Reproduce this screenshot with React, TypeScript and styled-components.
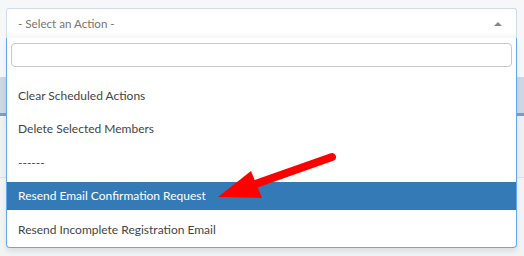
import styled, { createGlobalStyle } from "styled-components";

const GlobalStyle = createGlobalStyle`
  html, body {
    margin: 0;
    padding: 0;
    background: #f6f7f9;
  }
  body {
    font-family: Lato, "Open Sans", "Liberation Sans", sans-serif;
    width: 524px;
    height: 256px;
    overflow: hidden;
  }
`;

const Page = styled.div`
  position: relative;
  width: 524px;
  height: 256px;
  padding-top: 8px;
  box-sizing: border-box;
`;

const Toolbar = styled.div`
  padding: 0 7px 0 6px;
  position: relative;
  z-index: 5;
`;

const SelectBox = styled.div`
  position: relative;
  height: 30px;
  box-sizing: border-box;
  border: 1px solid #cfdcee;
  border-bottom: none;
  border-radius: 3px 3px 0 0;
  background: linear-gradient(to bottom, #fff 0%, #fff 80%, #f6f6f6 100%);
  display: flex;
  align-items: center;
  justify-content: space-between;
  padding: 0 12px 0 11px;
`;

const Placeholder = styled.span`
  font-size: 11.6px;
  color: #7a746e;
`;

const Caret = styled.span`
  width: 0;
  height: 0;
  border-left: 4px solid transparent;
  border-right: 4px solid transparent;
  border-bottom: 4px solid #888;
  margin-right: 2px;
`;

const Dropdown = styled.div`
  position: absolute;
  z-index: 10;
  top: 100%;
  left: -1px;
  right: -1px;
  height: 210px;
  box-sizing: border-box;
  background-color: #ffffff;
  border: 1px solid #62aaf0;
  border-top: none;
  border-radius: 0 0 4px 4px;
  box-shadow: 0 4px 5px rgba(0, 0, 0, 0.08);
  padding: 5px 0 4px;
`;

const SearchWrap = styled.div`
  padding: 0 4px;
`;

const Search = styled.input`
  display: block;
  width: 100%;
  height: 24px;
  box-sizing: border-box;
  border: 1px solid #c8c8c8;
  border-radius: 4px;
  outline: none;
  background: #fff;
`;

const Results = styled.ul`
  list-style: none;
  margin: 14px 0 0;
  padding: 0;
  display: flex;
  flex-direction: column;
  gap: 5.5px;
  background: #fff;
`;

const Option = styled.li<{ $active?: boolean }>`
  height: 28px;
  display: flex;
  align-items: center;
  padding-left: 11px;
  font-size: 12px;
  color: ${(p) => (p.$active ? "#fff" : "#444")};
  background: ${(p) => (p.$active ? "#337ab7" : "#fff")};
`;

const TableHead = styled.div`
  margin-top: 39px;
  height: 36px;
  background: #ccd6e4;
  border-bottom: 3px solid #7e9cc8;
`;

const TableBody = styled.div`
  height: 61px;
  background: #eef0f3;
  border-bottom: 1px solid #dcdfe4;
`;

const TableRest = styled.div`
  height: 80px;
  background: #f2f3f5;
`;

const Arrow = styled.svg`
  position: absolute;
  left: 0;
  top: 0;
  z-index: 20;
  pointer-events: none;
`;

const options = [
  "Clear Scheduled Actions",
  "Delete Selected Members",
  "------",
  "Resend Email Confirmation Request",
  "Resend Incomplete Registration Email",
];

export default function App() {
  return (
    <>
      <GlobalStyle />
      <Page>
        <Toolbar>
          <SelectBox>
            <Placeholder>- Select an Action -</Placeholder>
            <Caret />
            <Dropdown>
              <SearchWrap>
                <Search type="text" />
              </SearchWrap>
              <Results>
                {options.map((o, i) => (
                  <Option key={o} $active={i === 3}>
                    {o}
                  </Option>
                ))}
              </Results>
            </Dropdown>
          </SelectBox>
        </Toolbar>
        <TableHead />
        <TableBody />
        <TableRest />
        <Arrow width="524" height="256" viewBox="0 0 524 256">
          <line x1="332" y1="157" x2="250" y2="186" stroke="#ff0000" strokeWidth="8" strokeLinecap="round" />
          <polygon points="218,197 251,171 262,198" fill="#ff0000" />
        </Arrow>
      </Page>
    </>
  );
}
